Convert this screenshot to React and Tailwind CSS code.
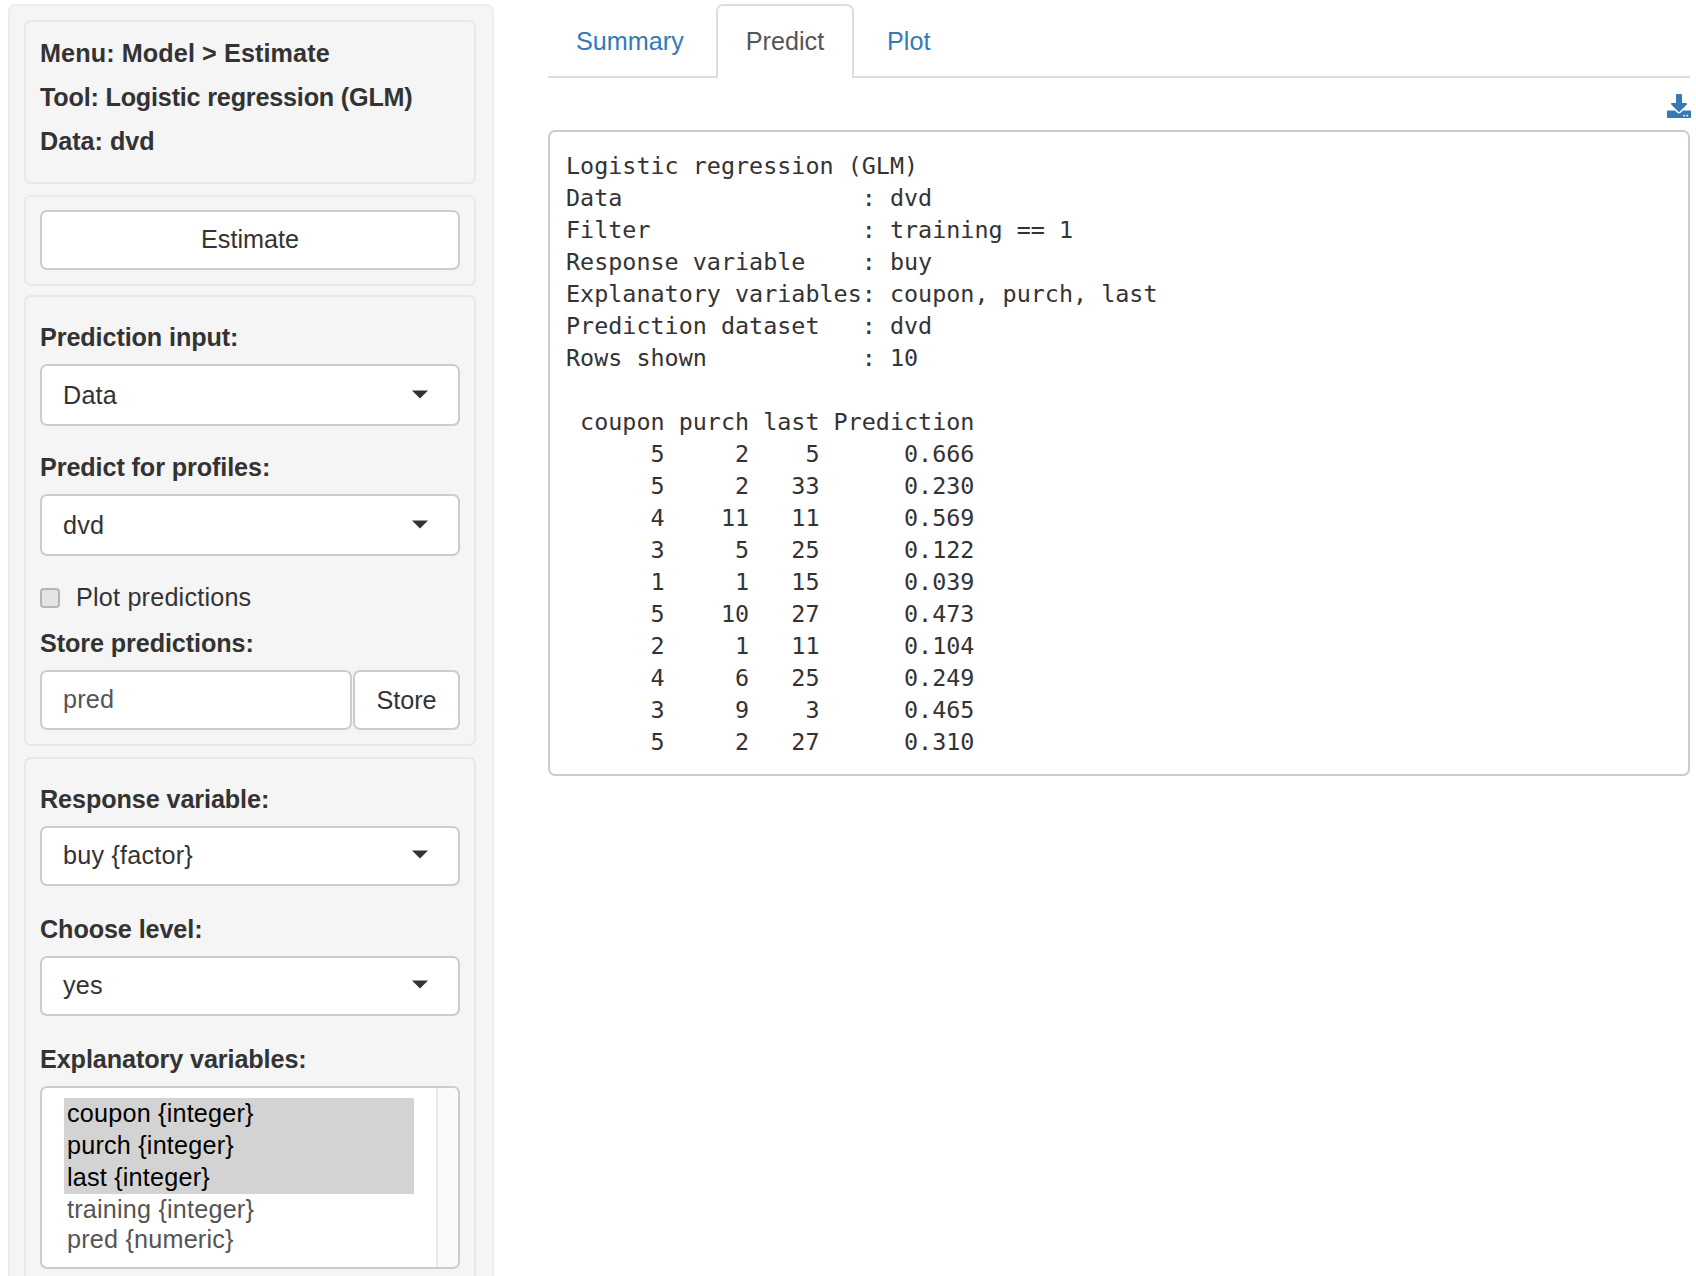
import React from "react";
import { FaDownload } from "react-icons/fa";

const output = `Logistic regression (GLM)
Data                 : dvd
Filter               : training == 1
Response variable    : buy
Explanatory variables: coupon, purch, last
Prediction dataset   : dvd
Rows shown           : 10

 coupon purch last Prediction
      5     2    5      0.666
      5     2   33      0.230
      4    11   11      0.569
      3     5   25      0.122
      1     1   15      0.039
      5    10   27      0.473
      2     1   11      0.104
      4     6   25      0.249
      3     9    3      0.465
      5     2   27      0.310`;

function Label({ children, className = "" }) {
  return (
    <div className={`h-[30px] leading-[30px] font-bold text-[25.2px] tracking-[-0.1px] text-[#333] ${className}`}>
      {children}
    </div>
  );
}

function Select({ value, className = "" }) {
  return (
    <div className={`flex w-[420px] items-center justify-between rounded-[7px] border-2 border-[#cccccc] bg-white pl-[21px] pr-[30px] text-[25.2px] tracking-[0.2px] text-[#333] ${className}`}>
      <span>{value}</span>
      <svg width="16" height="10" viewBox="0 0 16 10" className="mb-[4px]">
        <path d="M0 1.5h16L8 9.5z" fill="#333" />
      </svg>
    </div>
  );
}

function Well({ children, className = "" }) {
  return (
    <div className={`w-[452px] rounded-[7px] border-2 border-[#e8e8e8] bg-[#f5f5f5] pl-[14px] ${className}`}>
      {children}
    </div>
  );
}

export default function App() {
  return (
    <div className="flex h-[1276px] overflow-hidden bg-white font-['Liberation_Sans',Arial,sans-serif]">
      <div className="ml-2 mt-1 h-[1300px] w-[486px] shrink-0 rounded-[7px] border-2 border-[#ececec] bg-[#f5f5f5] pl-[14px] pt-[14px]">
        <Well className="h-[164px] pt-[16px]">
          <div className="h-[44px] text-[25.2px] font-bold leading-[30px] tracking-[0.1px] text-[#333]">Menu: Model &gt; Estimate</div>
          <div className="h-[44px] text-[25.2px] font-bold leading-[30px] tracking-[-0.2px] text-[#333]">Tool: Logistic regression (GLM)</div>
          <div className="h-[44px] text-[25.2px] font-bold leading-[30px] text-[#333]">Data: dvd</div>
        </Well>

        <Well className="mt-[11px] h-[91px] pt-[13px]">
          <button className="h-[60px] w-[420px] rounded-[7px] border-2 border-[#cccccc] bg-white text-[25.2px] text-[#333]">Estimate</button>
        </Well>

        <Well className="mt-[9px] h-[451px] pt-[25px]">
          <Label>Prediction input:</Label>
          <Select value="Data" className="mt-[12px] h-[62px] pt-[2px]" />
          <Label className="mt-[26px]">Predict for profiles:</Label>
          <Select value="dvd" className="mt-[12px] h-[62px] pt-[2px]" />
          <div className="mt-[25px] flex h-[34px] items-center text-[25.2px] tracking-[0.2px] text-[#333]">
            <span className="h-[20px] w-[20px] rounded-[4px] border-2 border-[#b5b5b5] bg-[#e4e4e4]" />
            <span className="ml-[16px]">Plot predictions</span>
          </div>
          <Label className="mt-[13px]">Store predictions:</Label>
          <div className="mt-[12px] flex w-[420px]">
            <div className="flex h-[60px] w-[312px] items-center rounded-[7px] border-2 border-[#cccccc] bg-white pl-[21px] text-[25.2px] tracking-[0.2px] text-[#555]">pred</div>
            <button className="ml-[1px] h-[60px] w-[107px] rounded-[7px] border-2 border-[#cccccc] bg-white pt-[2px] text-[25.2px] text-[#333]">Store</button>
          </div>
        </Well>

        <Well className="mt-[11px] h-[600px] pt-[25px]">
          <Label>Response variable:</Label>
          <Select value="buy {factor}" className="mt-[12px] h-[60px]" />
          <Label className="mt-[28px]">Choose level:</Label>
          <Select value="yes" className="mt-[12px] h-[60px]" />
          <Label className="mt-[28px]">Explanatory variables:</Label>
          <div className="mt-[12px] flex h-[183px] w-[420px] overflow-hidden rounded-[7px] border-2 border-[#cccccc] bg-white text-[25.2px] tracking-[0.2px] text-[#555]">
            <div className="flex-1 pl-[22px] pt-[10px]">
              <div className="w-[350px] bg-[#d3d3d3] text-black">
                <div className="h-[32px] pl-[3px] leading-[31px]">coupon {"{integer}"}</div>
                <div className="h-[32px] pl-[3px] leading-[31px]">purch {"{integer}"}</div>
                <div className="h-[32px] pl-[3px] leading-[31px]">last {"{integer}"}</div>
              </div>
              <div className="h-[30px] pl-[3px] leading-[30px]">training {"{integer}"}</div>
              <div className="h-[30px] pl-[3px] leading-[30px]">pred {"{numeric}"}</div>
            </div>
            <div className="w-[22px] border-l-2 border-[#e8e8e8] bg-[#fafafa]" />
          </div>
        </Well>
      </div>

      <div className="ml-[54px] w-[1142px] shrink-0">
        <div className="mt-1 flex h-[74px] border-b-2 border-[#dddddd] text-[25.2px]">
          <div className="flex h-[74px] w-[168px] items-center pl-[28px] pt-[2px] text-[#337ab7]">Summary</div>
          <div className="flex h-[74px] w-[138px] items-center justify-center rounded-t-[7px] border-2 border-b-0 border-[#dddddd] bg-white text-[#555]">Predict</div>
          <div className="flex h-[74px] items-center pl-[33px] pt-[2px] text-[#337ab7]">Plot</div>
        </div>
        <div className="-mr-[1px] flex h-[52px] items-start justify-end pt-[16px]">
          <FaDownload className="h-[24px] w-[24px] text-[#337ab7]" />
        </div>
        <pre className="h-[646px] w-[1142px] rounded-[7px] border-2 border-[#cccccc] bg-white pl-[16px] pt-[18px] font-['DejaVu_Sans_Mono',monospace] text-[23.4px] leading-[32px] text-[#333]">
          {output}
        </pre>
      </div>
    </div>
  );
}
